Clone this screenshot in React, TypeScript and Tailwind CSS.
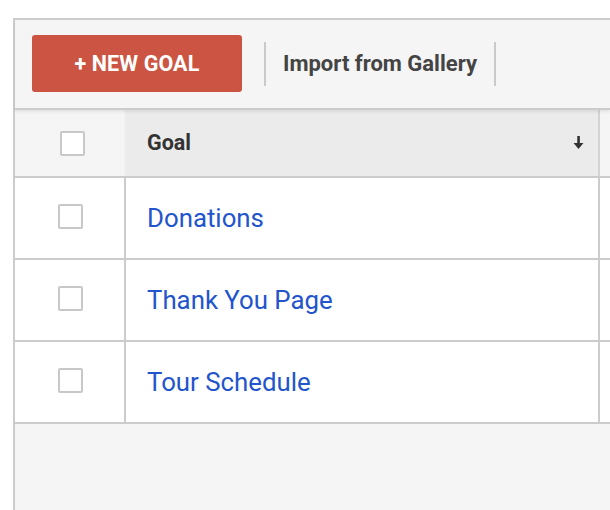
import React from "react";

function Box({ className = "" }: { className?: string }) {
  return (
    <div
      className={
        "w-[25px] h-[25px] rounded-[2px] border-2 border-[#c8c8c8] bg-white " +
        className
      }
    />
  );
}

const rows = ["Donations", "Thank You Page", "Tour Schedule"];

export default function App() {
  return (
    <div
      className="w-[610px] h-[510px] bg-white overflow-hidden pt-[18px] pl-[13px]"
      style={{ fontFamily: "Roboto, 'Liberation Sans', sans-serif" }}
    >
      <div className="h-full border-l-2 border-t-2 border-[#cccccc] bg-[#f5f5f5] flex flex-col">
        {/* toolbar */}
        <div className="h-[90px] shrink-0 border-b-2 border-[#cccccc] flex items-center pl-[17px] pb-px relative z-10 shadow-[0_2px_3px_rgba(0,0,0,0.08)]">
          <button className="w-[210px] h-[57px] rounded-[3px] bg-[#cb5542] text-white font-bold text-[21.5px] tracking-[0.1px] pt-[2px]">
            + NEW GOAL
          </button>
          <div className="w-[2px] h-[44px] bg-[#cacaca] ml-[22px]" />
          <div className="ml-[17px] text-[22px] font-bold text-[#444444]">
            Import from Gallery
          </div>
          <div className="w-[2px] h-[44px] bg-[#cacaca] ml-[17px]" />
        </div>

        {/* header */}
        <div className="h-[68px] shrink-0 flex border-b-2 border-[#cccccc]">
          <div className="w-[111px] shrink-0 border-r-2 border-[#efefef] bg-[#f5f5f5] flex items-center pl-[45px]">
            <Box />
          </div>
          <div className="w-[474px] shrink-0 border-r-2 border-[#d4d4d4] bg-[#ebebeb] flex items-center pl-[21px] pr-[13px]">
            <span className="text-[21.5px] font-bold text-[#333333]">Goal</span>
            <svg
              className="ml-auto"
              width="13"
              height="16"
              viewBox="0 0 13 16"
            >
              <rect x="5.25" y="1" width="2.6" height="8" fill="#333" />
              <polygon points="1.5,8 11.5,8 6.5,14" fill="#333" />
            </svg>
          </div>
          <div className="flex-1 bg-[#f5f5f5]" />
        </div>

        {/* rows */}
        {rows.map((r) => (
          <div
            key={r}
            className="h-[82px] shrink-0 flex border-b-2 border-[#cccccc] bg-white"
          >
            <div className="w-[111px] shrink-0 border-r-2 border-[#cccccc] flex items-center pl-[43px] pb-[3px]">
              <Box />
            </div>
            <div className="w-[474px] shrink-0 border-r-2 border-[#cccccc] flex items-center pl-[21px]">
              <span className="text-[25.8px] text-[#2255cc]">{r}</span>
            </div>
            <div className="flex-1" />
          </div>
        ))}
        <div className="flex-1" />
      </div>
    </div>
  );
}
